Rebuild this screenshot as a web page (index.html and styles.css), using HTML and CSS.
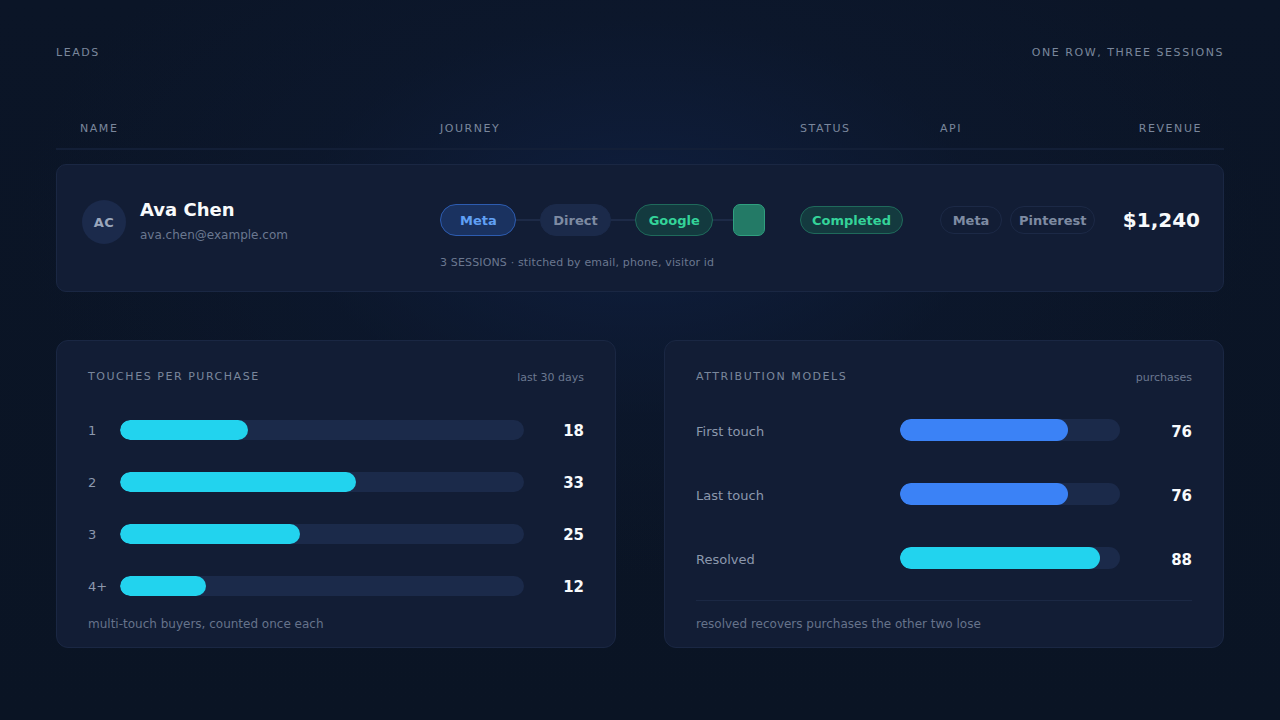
FILE: index.html
```html
<!DOCTYPE html>
<html lang="en">
<head>
<meta charset="utf-8">
<title>Leads</title>
<link rel="stylesheet" href="styles.css">
</head>
<body>
<main class="page">
  <header class="topbar">
    <span class="caps">LEADS</span>
    <span class="caps">ONE ROW, THREE SESSIONS</span>
  </header>

  <div class="table-head">
    <span class="caps">NAME</span>
    <span class="caps">JOURNEY</span>
    <span class="caps">STATUS</span>
    <span class="caps">API</span>
    <span class="caps right">REVENUE</span>
  </div>

  <section class="lead-row">
    <div class="cell person">
      <div class="avatar">AC</div>
      <div class="person-text">
        <div class="name">Ava Chen</div>
        <div class="email">ava.chen@example.com</div>
      </div>
    </div>
    <div class="journey">
      <div class="path">
        <span class="pill pill-meta">Meta</span>
        <span class="link"></span>
        <span class="pill pill-direct">Direct</span>
        <span class="link"></span>
        <span class="pill pill-google">Google</span>
        <span class="link short"></span>
        <span class="goal"></span>
      </div>
      <div class="journey-note">3 SESSIONS · stitched by email, phone, visitor id</div>
    </div>
    <div class="cell">
      <span class="tag tag-ok">Completed</span>
    </div>
    <div class="cell api">
      <span class="tag tag-api">Meta</span>
      <span class="tag tag-api">Pinterest</span>
    </div>
    <div class="cell revenue">$1,240</div>
  </section>

  <div class="panels">
    <section class="panel">
      <div class="panel-head">
        <span class="caps">TOUCHES PER PURCHASE</span>
        <span class="hint">last 30 days</span>
      </div>
      <div class="bars bars-touch">
        <div class="bar-row">
          <span class="bar-label">1</span>
          <div class="track"><div class="fill cyan" style="width:31.7%"></div></div>
          <span class="bar-value">18</span>
        </div>
        <div class="bar-row">
          <span class="bar-label">2</span>
          <div class="track"><div class="fill cyan" style="width:58.4%"></div></div>
          <span class="bar-value">33</span>
        </div>
        <div class="bar-row">
          <span class="bar-label">3</span>
          <div class="track"><div class="fill cyan" style="width:44.6%"></div></div>
          <span class="bar-value">25</span>
        </div>
        <div class="bar-row">
          <span class="bar-label">4+</span>
          <div class="track"><div class="fill cyan" style="width:21.3%"></div></div>
          <span class="bar-value">12</span>
        </div>
      </div>
      <p class="panel-foot foot-touch">multi-touch buyers, counted once each</p>
    </section>

    <section class="panel">
      <div class="panel-head">
        <span class="caps">ATTRIBUTION MODELS</span>
        <span class="hint">purchases</span>
      </div>
      <div class="bars bars-model">
        <div class="bar-row">
          <span class="bar-label">First touch</span>
          <div class="track"><div class="fill blue" style="width:76.4%"></div></div>
          <span class="bar-value">76</span>
        </div>
        <div class="bar-row">
          <span class="bar-label">Last touch</span>
          <div class="track"><div class="fill blue" style="width:76.4%"></div></div>
          <span class="bar-value">76</span>
        </div>
        <div class="bar-row">
          <span class="bar-label">Resolved</span>
          <div class="track"><div class="fill cyan" style="width:90.9%"></div></div>
          <span class="bar-value">88</span>
        </div>
      </div>
      <div class="divider"></div>
      <p class="panel-foot foot-model">resolved recovers purchases the other two lose</p>
    </section>
  </div>
</main>
</body>
</html>
```

FILE: styles.css
```css
* { box-sizing: border-box; }

html, body {
  margin: 0;
  height: 100%;
}

body {
  font-family: "DejaVu Sans", "Liberation Sans", sans-serif;
  color: #f1f5f9;
  background-color: #0a1322;
  background-image:
    radial-gradient(ellipse 620px 360px at 50% 30%, rgba(16, 32, 66, 0.85) 0%, rgba(13, 25, 48, 0.5) 55%, rgba(10, 19, 34, 0) 100%),
    linear-gradient(180deg, #0b1527 0%, #0a1424 100%);
  overflow: hidden;
}

.page {
  padding: 45px 56px 0;
}

.caps {
  font-size: 11px;
  line-height: 16px;
  letter-spacing: 1.55px;
  color: #7a879c;
}

.right { text-align: right; }

.topbar {
  display: flex;
  justify-content: space-between;
  align-items: center;
  height: 16px;
}

.table-head {
  margin-top: 60px;
  display: grid;
  grid-template-columns: 360px 360px 140px minmax(0, 1fr) auto;
  padding: 0 22px 11px 24px;
  border-bottom: 2px solid #131f37;
}

.lead-row {
  margin-top: 14px;
  display: grid;
  grid-template-columns: 360px 360px 140px minmax(0, 1fr) auto;
  align-items: start;
  padding: 33px 23px 22px 23px;
  background: #121d35;
  border: 1px solid #1a2743;
  border-radius: 10px;
  height: 128px;
}

.cell {
  height: 44px;
  display: flex;
  align-items: center;
}

.person { gap: 14px; }

.avatar {
  width: 44px;
  height: 44px;
  margin-left: 2px;
  margin-top: 4px;
  border-radius: 50%;
  background: #1b2a4b;
  color: #9aa6bb;
  font-weight: 700;
  font-size: 13px;
  display: flex;
  align-items: center;
  justify-content: center;
  letter-spacing: 0.5px;
}

.person-text {
  display: flex;
  flex-direction: column;
  padding-top: 2px;
}

.name {
  font-size: 18px;
  font-weight: 700;
  line-height: 22px;
  color: #f8fafc;
}

.email {
  margin-top: 6px;
  font-size: 12px;
  line-height: 16px;
  color: #6b7890;
}

.journey {
  display: flex;
  flex-direction: column;
}

.path {
  height: 44px;
  display: flex;
  align-items: center;
}

.pill {
  height: 32px;
  border-radius: 16px;
  display: inline-flex;
  align-items: center;
  justify-content: center;
  font-size: 13px;
  font-weight: 700;
  padding: 0 13px;
  border: 1px solid transparent;
}

.pill-meta {
  padding: 0 18px 0 19px;
  background: #1a3260;
  border-color: #2d5cb0;
  color: #60a0f5;
}

.pill-direct {
  padding: 0 12.5px;
  background: #1b2a4a;
  border-color: #1b2a4a;
  color: #7e8ba2;
}

.pill-google {
  padding: 0 12.5px;
  background: #133a3f;
  border-color: #1f6a5b;
  color: #34d399;
}

.link {
  width: 24px;
  height: 2px;
  background: #1d2a47;
}

.link.short { width: 20px; }

.goal {
  width: 32px;
  height: 32px;
  border-radius: 7px;
  background: #237a66;
  border: 1px solid #2fa07f;
}

.journey-note {
  margin-top: 14px;
  font-size: 11px;
  line-height: 14px;
  letter-spacing: 0.15px;
  color: #6b7890;
}

.tag {
  height: 28px;
  border-radius: 14px;
  display: inline-flex;
  align-items: center;
  justify-content: center;
  font-size: 13px;
  font-weight: 700;
  padding: 0 11px;
  border: 1px solid transparent;
}

.tag-ok {
  background: #143a3f;
  border-color: #1f6a5b;
  color: #34d399;
}

.api { gap: 8px; }

.tag-api {
  min-width: 62px;
  padding: 0 8px;
  border-color: #1c2946;
  color: #7e8ba2;
}

.revenue {
  justify-content: flex-end;
  font-size: 20px;
  font-weight: 700;
  color: #f8fafc;
}

.panels {
  margin-top: 48px;
  display: grid;
  grid-template-columns: 1fr 1fr;
  gap: 48px;
}

.panel {
  background: #121d35;
  border: 1px solid #1a2743;
  border-radius: 12px;
  padding: 28px 31px 16px;
  height: 308px;
}

.panel-head {
  display: flex;
  justify-content: space-between;
  align-items: center;
  height: 16px;
}

.hint {
  font-size: 11px;
  color: #6b7890;
}

.bars {
  display: flex;
  flex-direction: column;
}

.bars-touch {
  margin-top: 35px;
  gap: 32px;
}

.bars-model {
  margin-top: 34px;
  gap: 42px;
}

.bar-row {
  display: grid;
  align-items: center;
}

.bars-touch .bar-row {
  grid-template-columns: 32px 404px 1fr;
  height: 20px;
}

.bars-model .bar-row {
  grid-template-columns: 204px 220px 1fr;
  height: 22px;
}

.bar-label {
  font-size: 13px;
  color: #8c98ad;
}

.bars-model .bar-label { padding-top: 2px; }

.track {
  height: 100%;
  background: #1b2a4a;
  border-radius: 11px;
  overflow: hidden;
}

.fill {
  height: 100%;
  border-radius: 11px;
}

.fill.cyan { background: #22d3ee; }
.fill.blue { background: #3b82f6; }

.bar-value {
  text-align: right;
  font-size: 15px;
  font-weight: 700;
  color: #f8fafc;
  padding-top: 1px;
}

.bars-model .bar-value { padding-top: 3px; }

.panel-foot {
  margin: 0;
  font-size: 12px;
  line-height: 16px;
  color: #66738b;
}

.foot-touch { margin-top: 20px; }

.divider {
  margin-top: 31px;
  height: 1px;
  background: #1b2844;
}

.foot-model { margin-top: 15px; }
```
